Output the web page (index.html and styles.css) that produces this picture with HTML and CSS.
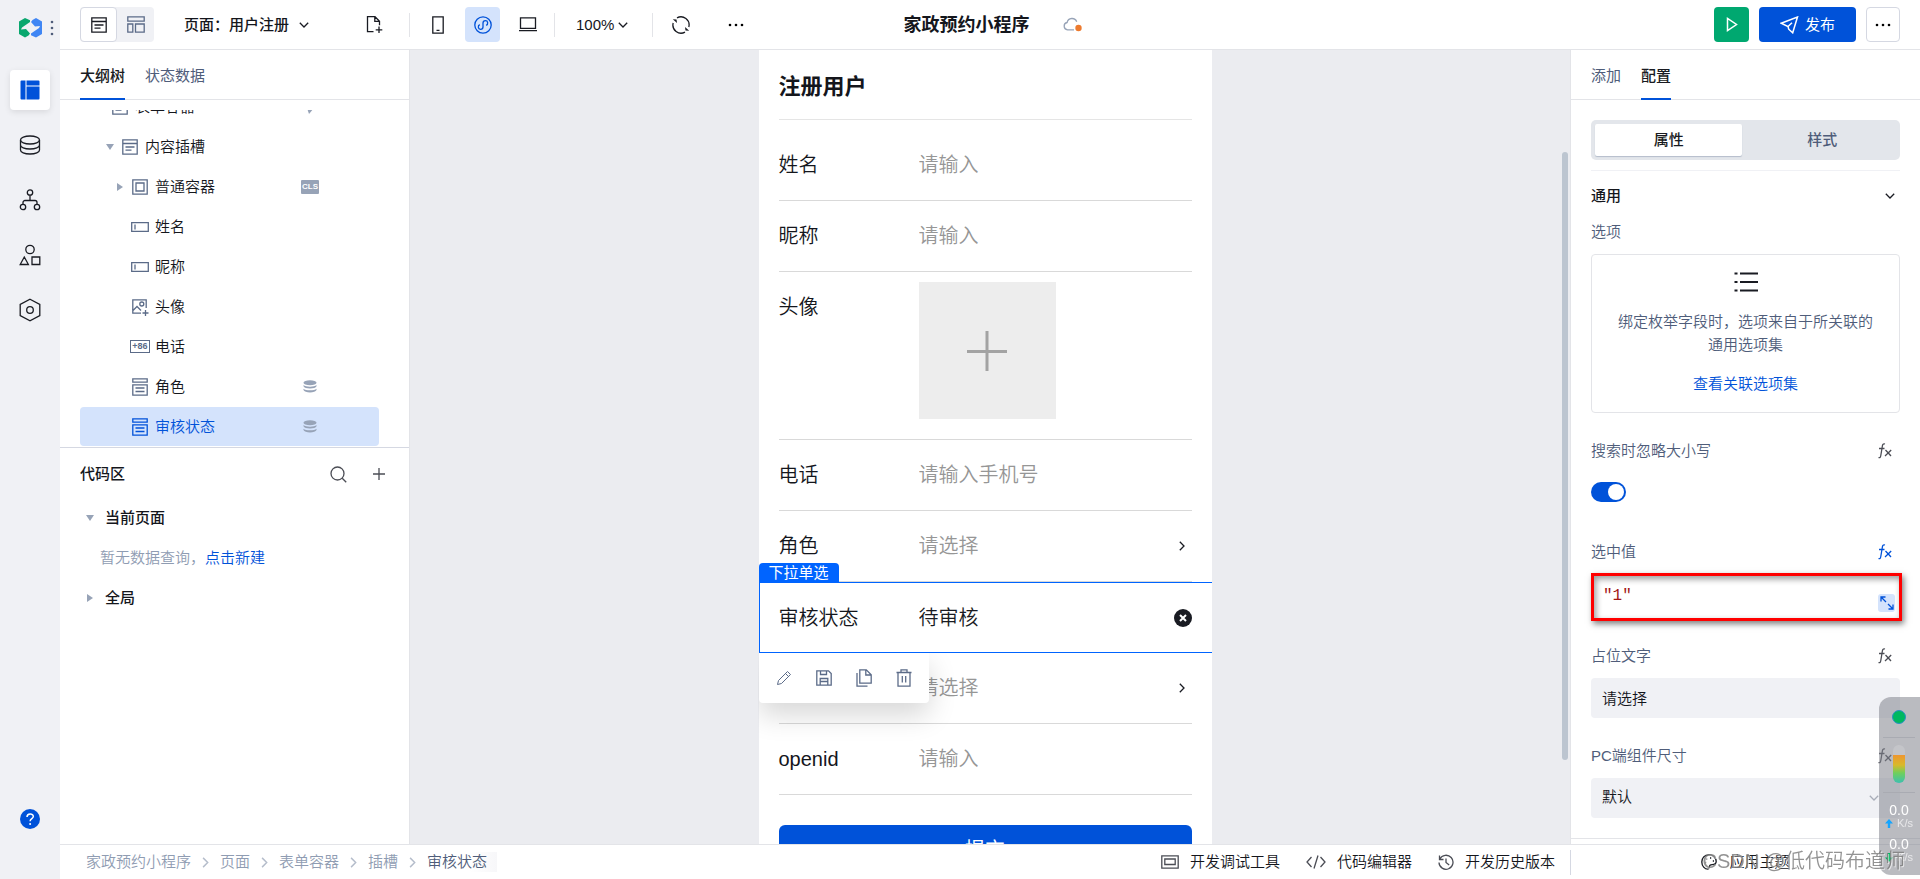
FILE: index.html
```html
<!DOCTYPE html>
<html lang="zh-CN">
<head>
<meta charset="utf-8">
<title>家政预约小程序</title>
<link rel="stylesheet" href="styles.css">
</head>
<body>
<svg class="defs" aria-hidden="true">
  <symbol id="i-form" viewBox="0 0 16 16"><path d="M.8.8h14.4v14.4H.8zM.8 4.5h14.4M3.5 8h9M3.5 11.2h6"/></symbol>
  <symbol id="i-down" viewBox="0 0 10 6"><path d="M.8.8 5 5 9.200.8"/></symbol>
  <symbol id="i-right" viewBox="0 0 6 10"><path d="M.8.8 5 5 .8 9.200"/></symbol>
  <symbol id="i-input" viewBox="0 0 18 10"><path d="M.7.7h16.600v8.600H.7zM4 2.500v5"/></symbol>
  <symbol id="i-select" viewBox="0 0 16 18"><path d="M.8.8h14.400v3.400H.8zM.8 6.800h14.400v10.400H.8zM3.500 10h9M3.500 13.500h9"/></symbol>
  <symbol id="i-stack" viewBox="0 0 14 13"><ellipse cx="7" cy="2.700" rx="6.500" ry="2.500"/><path d="M.5 5c2 2.200 11 2.200 13 0v1.300c-1 3-12 3-13 0zM.5 8.700c2 2.200 11 2.200 13 0V10c-1 3.200-12 3.200-13 0z"/></symbol>
  <symbol id="i-fx" viewBox="0 0 14 16"><path d="M7 1C5 .3 4.500 2 4.200 4L2.800 12.500c-.3 2-1 2.500-2.300 2M1 5.500h5.500M7.500 7l5.500 6M13.200 7 7 13"/></symbol>
</svg>
<div class="app">
  <nav class="rail" aria-label="主导航">
    <div class="brand">
      <svg width="23" height="20" viewBox="0 0 23 20"><path fill="#09a76e" d="M0 3.500 6 0 11 2.200V4L3 9.500 2 11.500 7 11l4 4.500-1.500 2L6 19.500 0 16z"/><path fill="#4086f4" d="M23 16 17 19.500 12 17.300V15.500L20 10l1-2-5 .5-4-4.500 1.500-2L17 0 23 3.500z"/></svg>
      <svg width="4" height="16" viewBox="0 0 4 16" fill="#4f5d7a"><circle cx="2" cy="2" r="1.300"/><circle cx="2" cy="8" r="1.300"/><circle cx="2" cy="14" r="1.300"/></svg>
    </div>
    <button class="rail-btn on" aria-label="页面"><svg width="20" height="20" viewBox="0 0 20 20" fill="#0052d9"><path d="M1.500.5H5.500V19.500H1.500a1 1 0 0 1-1-1v-17a1 1 0 0 1 1-1zM6.500 .5h12a1 1 0 0 1 1 1V5.500H6.500zM6.500 6.500h13v12a1 1 0 0 1-1 1h-12z"/></svg></button>
    <button class="rail-btn" aria-label="数据"><svg class="line" width="22" height="20" viewBox="0 0 22 20"><ellipse cx="11" cy="5" rx="9.500" ry="4"/><path d="M1.500 5v10c0 2.200 4 4 9.500 4s9.500-1.800 9.500-4V5M1.500 10c0 2.200 4 4 9.500 4s9.500-1.800 9.500-4"/></svg></button>
    <button class="rail-btn" aria-label="流程"><svg class="line" width="22" height="22" viewBox="0 0 22 22"><circle cx="11" cy="3.500" r="2.700"/><circle cx="4" cy="18" r="2.700"/><circle cx="18" cy="18" r="2.700"/><path d="M11 6.300v5.200M4 15.300v-1.800a2 2 0 0 1 2-2h10a2 2 0 0 1 2 2v1.800"/></svg></button>
    <button class="rail-btn" aria-label="素材"><svg class="line" width="22" height="22" viewBox="0 0 22 22"><circle cx="11" cy="5.500" r="4.200"/><path d="M5.300 13 1.200 20.500h8.200zM13 13h7.800v7.500H13z"/></svg></button>
    <button class="rail-btn" aria-label="设置"><svg class="line" width="22" height="24" viewBox="0 0 22 24"><path d="M11 1.200 20.800 6.500v11L11 22.800 1.200 17.500v-11z"/><circle cx="11" cy="12" r="3.300"/></svg></button>
    <button class="rail-btn help" aria-label="帮助"><svg width="20" height="20" viewBox="0 0 20 20"><circle cx="10" cy="10" r="10" fill="#0052d9"/><path d="M7 8c0-4 6.300-4 6.300-.5 0 2-3.200 2.300-3.200 4.700" fill="none" stroke="#fff" stroke-width="1.500"/><circle cx="10.100" cy="15" r="1" fill="#fff"/></svg></button>
  </nav>

  <div class="main">
    <header class="topbar">
      <div class="tools">
        <div class="modes">
          <button class="mode on" aria-label="表单视图"><svg class="line" width="16" height="16"><use href="#i-form"/></svg></button>
          <button class="mode" aria-label="布局视图"><svg class="line slate" width="18" height="17" viewBox="0 0 18 17"><path d="M.8.8h16.400v4.400H.8zM.8 8h5v8.200h-5zM8.500 8h8.700v8.200H8.500z"/></svg></button>
        </div>
        <button class="plain page-name">页面：用户注册 <svg class="line" width="10" height="6"><use href="#i-down"/></svg></button>
        <button class="plain new-page" aria-label="新建页面"><svg class="line" width="17" height="19" viewBox="0 0 17 19"><path d="M7.500 16.700H1.500v-15h7.500l4.500 4.500v4M8.800 1.700v4.600h4.700M13 11.500v6.500M9.700 14.800h6.600"/></svg></button>
        <span class="sep"></span>
        <div class="devices">
          <button class="device" aria-label="手机"><svg class="line" width="12" height="18" viewBox="0 0 12 18"><path d="M.8.8h10.400v16.400H.8zM4.500 14.300h3"/></svg></button>
          <button class="device on" aria-label="小程序"><svg class="line blue" width="18" height="18" viewBox="0 0 18 18"><circle cx="9" cy="9" r="8.200"/><path d="M5.800 8.700C3.500 9.800 4 13.300 6.500 13.300c1.400 0 2.500-.9 2.500-2.300V7c0-1.400 1.100-2.300 2.500-2.300 2.500 0 3 3.500.7 4.600"/></svg></button>
          <button class="device" aria-label="电脑"><svg class="line" width="18" height="15" viewBox="0 0 18 15"><path d="M1.500.8h15v10.500h-15zM0 13.700h18"/></svg></button>
        </div>
        <span class="sep"></span>
        <button class="plain zoom">100% <svg class="line" width="10" height="6"><use href="#i-down"/></svg></button>
        <span class="sep"></span>
        <button class="plain refresh" aria-label="刷新"><svg class="line" width="18" height="18" viewBox="0 0 18 18"><path d="M5 1.900A8.100 8.100 0 0 1 16.800 11M13 16.100A8.100 8.100 0 0 1 1.200 7"/><path d="M.8 3.200 4.500 3.500 5 7zM17.200 14.800l-3.700-.3L13 11z" fill="#191b22" stroke="none"/></svg></button>
        <button class="plain" aria-label="更多"><svg width="16" height="4" viewBox="0 0 16 4"><circle cx="2" cy="2" r="1.300"/><circle cx="8" cy="2" r="1.300"/><circle cx="14" cy="2" r="1.300"/></svg></button>
      </div>
      <div class="title">
        <h1>家政预约小程序</h1>
        <svg width="20" height="15" viewBox="0 0 20 15"><path d="M11 12.800H4.500a3.700 3.700 0 0 1-.4-7.300 5 5 0 0 1 9.600-.7" fill="none" stroke="#97a3b7" stroke-width="1.300"/><circle cx="15.500" cy="11" r="3.200" fill="#ed7b2f"/></svg>
      </div>
      <div class="actions">
        <button class="btn play" aria-label="预览"><svg width="12" height="15" viewBox="0 0 12 15"><path d="M1.500 1.500v12l9-6z" fill="none" stroke="#fff" stroke-width="1.500"/></svg></button>
        <button class="btn publish"><svg width="19" height="18" viewBox="0 0 19 18"><path d="M1.200 7.200 17.500 1 12.700 16.800 8.700 13.200 8 10.500 1.200 7.200zM8 10.500l4-3.800" fill="none" stroke="#fff" stroke-width="1.500"/></svg>发布</button>
        <button class="btn more" aria-label="更多操作"><svg width="16" height="4" viewBox="0 0 16 4"><circle cx="2" cy="2" r="1.300"/><circle cx="8" cy="2" r="1.300"/><circle cx="14" cy="2" r="1.300"/></svg></button>
      </div>
    </header>

    <div class="work">
      <aside class="left">
        <div class="tabs"><button class="tab on">大纲树</button><button class="tab">状态数据</button></div>
        <ul class="tree">
          <li class="node l1"><i class="caret"></i><svg class="line slate" width="16" height="16"><use href="#i-form"/></svg><span>表单容器</span><svg class="mark" width="18" height="14" viewBox="0 0 18 14"><path d="M6 8h7l-5 6z"/></svg></li>
          <li class="node l2"><i class="caret open"></i><svg class="line slate" width="16" height="16"><use href="#i-form"/></svg><span>内容插槽</span></li>
          <li class="node l3"><i class="caret closed"></i><svg class="line slate" width="16" height="16" viewBox="0 0 16 16"><path d="M.8.800h14.400v14.400H.8zM4 4h8v8H4z"/></svg><span>普通容器</span><b class="cls">CLS</b></li>
          <li class="node l3"><i class="caret"></i><svg class="line slate" width="18" height="10"><use href="#i-input"/></svg><span>姓名</span></li>
          <li class="node l3"><i class="caret"></i><svg class="line slate" width="18" height="10"><use href="#i-input"/></svg><span>昵称</span></li>
          <li class="node l3"><i class="caret"></i><svg class="line slate" width="18" height="18" viewBox="0 0 18 18"><path d="M10 15.200H1.800V1.800h13.400V10M2 12.500l4-4 4 4M14.500 12v6M11.500 15h6"/><circle cx="10.800" cy="6" r="2"/></svg><span>头像</span></li>
          <li class="node l3"><i class="caret"></i><b class="tel">+86</b><span>电话</span></li>
          <li class="node l3"><i class="caret"></i><svg class="line slate" width="16" height="18"><use href="#i-select"/></svg><span>角色</span><svg class="mark" width="18" height="13"><use href="#i-stack"/></svg></li>
          <li class="node l3 on"><i class="caret"></i><svg class="line blue" width="16" height="18"><use href="#i-select"/></svg><span>审核状态</span><svg class="mark" width="18" height="13"><use href="#i-stack"/></svg></li>
        </ul>
        <section class="code">
          <div class="code-head"><h2>代码区</h2>
            <button class="plain" aria-label="搜索"><svg class="line gray" width="17" height="17" viewBox="0 0 17 17"><circle cx="7.500" cy="7.500" r="6.500"/><path d="m12.200 12.200 4 4"/></svg></button>
            <button class="plain" aria-label="添加"><svg class="line gray" width="12" height="12" viewBox="0 0 12 12"><path d="M6 0v12M0 6h12"/></svg></button>
          </div>
          <div class="code-row"><i class="caret open"></i><b>当前页面</b></div>
          <div class="code-row hint">暂无数据查询，<a href="#">点击新建</a></div>
          <div class="code-row"><i class="caret closed"></i><b>全局</b></div>
        </section>
      </aside>

      <main class="canvas">
        <form class="phone">
          <h2>注册用户</h2>
          <div class="field"><label for="f1">姓名</label><input id="f1" placeholder="请输入"></div>
          <div class="field"><label for="f2">昵称</label><input id="f2" placeholder="请输入"></div>
          <div class="field avatar"><label for="f3">头像</label><button type="button" id="f3" class="upload" aria-label="上传头像"><svg width="40" height="40" viewBox="0 0 40 40"><path d="M20 0v40M0 20.500h40" stroke="#a3a3a3" stroke-width="3"/></svg></button></div>
          <div class="field"><label for="f4">电话</label><input id="f4" placeholder="请输入手机号"></div>
          <div class="field"><label for="f5">角色</label><select id="f5"><option>请选择</option></select><svg class="line arrow" width="6" height="10"><use href="#i-right"/></svg></div>
          <div class="field picked"><span class="tag">下拉单选</span>
            <label for="f6">审核状态</label><select id="f6"><option>待审核</option></select>
            <svg class="clear" width="18" height="18" viewBox="0 0 18 18"><circle cx="9" cy="9" r="9" fill="#191b22"/><path d="m6 6 6 6M12 6l-6 6" stroke="#fff" stroke-width="2"/></svg>
            <div class="float-tools">
              <button type="button" aria-label="编辑"><svg class="line slate thin" width="16" height="16" viewBox="0 0 16 16"><path d="M1.500 14.500 2.500 10.500 11.500 1.500 14.500 4.500 5.500 13.500zM9.500 3.500l3 3"/></svg></button>
              <button type="button" aria-label="保存"><svg class="line slate" width="16" height="16" viewBox="0 0 16 16"><path d="M.8.800h11.700l2.700 2.700v11.700H.8zM4.500 1v3.500h6V1M4.200 15V8.500h7.600V15M4.200 11.500h7.600"/></svg></button>
              <button type="button" aria-label="复制"><svg class="line slate" width="16" height="18" viewBox="0 0 16 18"><path d="M3.800.8h6.500l4.900 4.900v8.500H3.800zM9.800 1v5h5M1 4v13.200h10.500"/></svg></button>
              <button type="button" aria-label="删除"><svg class="line slate" width="16" height="18" viewBox="0 0 16 18"><path d="M.5 3.500h15M2 3.500v13.700h12V3.500M5 3.500V.8h6v2.700M6.300 7v6.500M9.700 7v6.500"/></svg></button>
            </div>
          </div>
          <div class="field"><span class="blank"></span><select aria-label="选择"><option>请选择</option></select><svg class="line arrow" width="6" height="10"><use href="#i-right"/></svg></div>
          <div class="field"><label for="f8">openid</label><input id="f8" placeholder="请输入"></div>
          <button type="button" class="submit">提交</button>
        </form>
        <div class="scroll"><i></i></div>
      </main>

      <aside class="right">
        <div class="tabs"><button class="tab">添加</button><button class="tab on">配置</button></div>
        <div class="seg"><button class="on">属性</button><button>样式</button></div>
        <div class="peek"><span>下拉单选</span></div>
        <div class="props">
          <div class="prop-head"><h3>通用</h3><svg class="line" width="10" height="6"><use href="#i-down"/></svg></div>
          <div class="name">选项</div>
          <div class="bind">
            <svg width="24" height="20" viewBox="0 0 24 20"><path d="M6 1.500h18M6 10h18M6 18.500h18M.5 1.500h3M.5 10h3M.5 18.500h3" stroke="#191b22" stroke-width="2"/></svg>
            <p>绑定枚举字段时，选项来自于所关联的通用选项集</p>
            <a href="#">查看关联选项集</a>
          </div>
          <div class="name"><label for="p1">搜索时忽略大小写</label><svg class="line gray" width="14" height="16"><use href="#i-fx"/></svg></div>
          <input class="switch" id="p1" type="checkbox" role="switch" checked>
          <div class="name"><label for="p2">选中值</label><svg class="line blue" width="14" height="16"><use href="#i-fx"/></svg></div>
          <div class="value"><input id="p2" value='"1"'><button class="expand" aria-label="展开"><svg class="line blue" width="14" height="14" viewBox="0 0 14 14"><path d="M6 6 1 1M1 5.500V1h4.500M8 8l5 5M13 8.500V13H8.500"/></svg></button></div>
          <div class="name"><label for="p3">占位文字</label><svg class="line gray" width="14" height="16"><use href="#i-fx"/></svg></div>
          <input class="box" id="p3" value="请选择">
          <div class="name"><label for="p4">PC端组件尺寸</label><svg class="line gray" width="14" height="16"><use href="#i-fx"/></svg></div>
          <div class="pick"><select class="box" id="p4"><option>默认</option></select><svg class="line" width="10" height="6"><use href="#i-down"/></svg></div>
        </div>
      </aside>
    </div>

    <footer class="status">
      <nav class="crumbs" aria-label="路径">
        <a href="#">家政预约小程序</a><svg class="line" width="7" height="11"><use href="#i-right"/></svg>
        <a href="#">页面</a><svg class="line" width="7" height="11"><use href="#i-right"/></svg>
        <a href="#">表单容器</a><svg class="line" width="7" height="11"><use href="#i-right"/></svg>
        <a href="#">插槽</a><svg class="line" width="7" height="11"><use href="#i-right"/></svg>
        <a href="#" class="here">审核状态</a>
      </nav>
      <div class="dev">
        <button class="plain"><svg class="line gray" width="18" height="14" viewBox="0 0 18 14"><path d="M.8.800h16.400v12.400H.8zM3.800 4h10.400v5.500H3.800z"/></svg>开发调试工具</button>
        <button class="plain"><svg class="line gray" width="20" height="14" viewBox="0 0 20 14"><path d="M5.500 2 1 7l4.500 5M14.500 2 19 7l-4.500 5M12 .5 8 13.500"/></svg>代码编辑器</button>
        <button class="plain"><svg class="line gray" width="16" height="16" viewBox="0 0 16 16"><path d="M1.500 1.500v4h4M1.800 5A7 7 0 1 1 1 8.500M8 4.500v4l3.200 2.500"/></svg>开发历史版本</button>
      </div>
      <div class="theme"><button class="plain"><svg class="line" width="16" height="16" viewBox="0 0 16 16"><path d="M8 .8C3.500.8.8 4 .8 8s3 7.200 6 7.200c2.500 0 1-3 2.200-4 1.500-1.200 6.200.5 6.200-3.700C15.200 3.500 12 .8 8 .8z"/><path d="M4 8.500h1.200M5 5h1.200M9 4h1.200M11.800 7H13"/></svg>应用主题</button></div>
    </footer>
  </div>
</div>

<div class="watermark">CSDN @低代码布道师</div>
<div class="monitor">
  <i class="dot"></i><hr><i class="battery"></i><hr>
  <div class="speed">0.0<small><svg width="8" height="9" viewBox="0 0 8 9" fill="#14a5ff"><path d="M4 0 8 4.500H5.200V9H2.800V4.500H0z"/></svg> K/s</small></div>
  <div class="speed">0.0<small><svg width="8" height="9" viewBox="0 0 8 9" fill="#00b860"><path d="M4 9 0 4.500h2.800V0h2.400v4.500H8z"/></svg> K/s</small></div>
</div>
</body>
</html>
```
FILE: styles.css
```css
* { box-sizing: border-box; }
body {
  margin: 0;
  font: 15px/20px "Liberation Sans", "Noto Sans CJK SC", sans-serif;
  font-weight: 350;
  color: #14161c;
  background: #fff;
}
button, input, select { font: inherit; color: inherit; margin: 0; padding: 0; border: 0; background: none; }
h1, h2, h3 { margin: 0; font-weight: 500; font-size: 15px; }
p, ul { margin: 0; padding: 0; }
b { font-weight: 500; }
a { color: #0052d9; text-decoration: none; }
svg { flex: none; display: block; }
.defs { position: absolute; width: 0; height: 0; }
.line { fill: none; stroke: #191b22; stroke-width: 1.3; }
.slate { stroke: #5b6b88; }
.blue { stroke: #0052d9; }
.gray { stroke: #4b4d55; }
.thin { stroke-width: 1; }
.plain { display: flex; align-items: center; }

.app { display: flex; height: 100vh; overflow: hidden; }
.main { flex: 1; min-width: 0; display: flex; flex-direction: column; }

.rail { width: 60px; background: #f0f1f5; display: flex; flex-direction: column; align-items: center; gap: 15px; padding-bottom: 40px; }
.brand { display: flex; align-items: center; gap: 8px; height: 55px; padding-left: 12px; }
.rail-btn { width: 40px; height: 40px; border-radius: 4px; display: flex; align-items: center; justify-content: center; }
.rail-btn.on { background: #fff; box-shadow: 0 2px 6px rgba(0, 0, 0, .1); }
.help { margin-top: auto; }

.topbar { height: 50px; border-bottom: 1px solid #e3e4e8; padding: 0 20px; display: grid; grid-template-columns: 1fr auto 1fr; align-items: center; }
.tools { display: flex; align-items: center; }
.modes { display: flex; background: #f0f1f5; border-radius: 4px; }
.mode { width: 37px; height: 35px; border-radius: 4px; display: flex; align-items: center; justify-content: center; }
.mode.on { background: #fff; border: 1px solid #d5d8e2; }
.page-name { margin-left: 30px; gap: 10px; font-weight: 500; }
.new-page { margin-left: 57px; }
.sep { width: 1px; height: 24px; background: #e3e4e8; }
.new-page + .sep { margin-left: 26px; }
.devices { display: flex; gap: 10px; margin: 0 9px 0 10px; }
.device { width: 35px; height: 35px; border-radius: 4px; display: flex; align-items: center; justify-content: center; }
.device.on { background: #d4e3fc; }
.zoom { gap: 4px; margin: 0 24px 0 21px; }
.refresh { margin: 0 38px 0 19px; }
.title { display: flex; align-items: center; gap: 33px; padding-left: 6px; }
.title h1 { font-size: 18px; font-weight: 700; }
.actions { display: flex; justify-content: flex-end; gap: 10px; }
.btn { width: 35px; height: 35px; border-radius: 4px; display: flex; align-items: center; justify-content: center; gap: 6px; }
.play { background: #00a870; }
.publish { width: 97px; background: #0052d9; color: #fff; font-weight: 400; }
.more { width: 34px; border: 1px solid #d5d8e2; }

.work { flex: 1; min-height: 0; display: flex; }
.left { width: 350px; border-right: 1px solid #e3e4e8; display: flex; flex-direction: column; }
.tabs { height: 50px; flex: none; border-bottom: 1px solid #e3e4e8; padding: 0 20px; display: flex; gap: 20px; }
.tab { height: 50px; padding-top: 3px; color: #4f5d7a; font-weight: 400; border-bottom: 2px solid transparent; }
.tab.on { color: #191b22; font-weight: 500; border-color: #0052d9; }
.tree { list-style: none; height: 337px; margin: 10px 30px 0 20px; flex: none; display: flex; flex-direction: column; justify-content: flex-end; gap: 1px; overflow: hidden; padding-bottom: 1px; }
.node { height: 39px; flex: none; display: flex; align-items: center; border-radius: 4px; }
.node.on { background: #d4e3fc; color: #0052d9; }
.l1 { padding-left: 12px; }
.l2 { padding-left: 22px; }
.l3 { padding-left: 32px; }
.node > .line, .tel { width: 20px; margin: 0 5px 0 2px; }
.tel { height: 13px; border: 1px solid #5b6b88; color: #5b6b88; font: 700 9px/11px "Liberation Sans", sans-serif; text-align: center; }
.caret { width: 16px; flex: none; display: flex; justify-content: center; }
.caret::after { content: ""; border: 0 solid transparent; }
.caret.open::after { border-width: 6px 4px 0; border-top-color: #97a3b7; }
.caret.closed::after { border-width: 4px 0 4px 6px; border-left-color: #97a3b7; }
.mark, .cls { margin: 0 60px 0 auto; fill: #97a3b7; }
.cls { width: 18px; height: 14px; background: #97a3b7; color: #fff; border-radius: 1px; font: 700 8px/14px "Liberation Sans", sans-serif; text-align: center; }
.code { flex: 1; border-top: 1px solid #d5d8e2; padding: 6px 20px; }
.code-head { height: 40px; display: flex; align-items: center; gap: 26px; padding-right: 4px; }
.code-head h2 { flex: 1; }
.code-row { height: 40px; display: flex; align-items: center; gap: 7px; padding-left: 2px; }
.code-head + .code-row { margin-top: 4px; }
.code-row.hint { gap: 0; padding-left: 20px; color: #8f9cb2; }

.canvas { flex: 1; min-width: 0; background: #ebecf0; display: flex; overflow: hidden; }
.phone { width: 453px; margin: 0 auto; padding: 0 20px; background: #fff; flex: none; font-size: 20px; line-height: 30px; }
.phone h2 { font-size: 22px; font-weight: 700; padding: 22px 0 17px; border-bottom: 1px solid #e5e5e5; margin-bottom: 10px; }
.field { height: 71px; display: flex; align-items: center; border-bottom: 1px solid #d9d9d9; }
.field label, .blank { width: 140px; flex: none; }
.field input, .field select { flex: 1; min-width: 0; height: 40px; appearance: none; outline: 0; }
.field input::placeholder, .field select { color: #969696; opacity: 1; }
.arrow { margin-right: 7px; }
.field.avatar { height: auto; align-items: flex-start; padding: 10px 0 20px; }
.avatar label { padding-top: 10px; }
.upload { width: 137px; height: 137px; background: #ededed; display: flex; align-items: center; justify-content: center; }
.field.picked { position: relative; margin: 0 -20px; padding: 0 20px; border: 1px solid #0064ff; border-right: 0; padding-left: 19px; }
.field.picked select { color: #191b22; }
.tag { position: absolute; left: -1px; bottom: 100%; width: 80px; height: 20px; background: #0064ff; color: #fff; border-radius: 4px 4px 0 0; font-size: 15px; line-height: 20px; text-align: center; font-weight: 400; }
.float-tools { position: absolute; left: -1px; top: calc(100% + 1px); z-index: 1; width: 170px; height: 50px; padding: 0 5px; background: #fff; border-radius: 0 0 4px 4px; display: flex; box-shadow: 0 12px 28px rgba(0, 0, 0, .16); clip-path: inset(0 -50px -50px 0); }
.float-tools button { width: 40px; display: flex; align-items: center; justify-content: center; }
.submit { display: block; width: 100%; height: 50px; margin-top: 30px; border-radius: 6px; background: #0052d9; color: #fff; font-weight: 400; }
.scroll { width: 10px; padding: 102px 2px 84px; display: flex; }
.scroll i { flex: 1; background: #bcc5d0; border-radius: 3px; }

.right { width: 350px; border-left: 1px solid #e3e4e8; display: flex; flex-direction: column; overflow: hidden; }
.seg { display: flex; margin: 20px 20px 0; padding: 4px; height: 40px; flex: none; border-radius: 5px; background: #e3e6eb; }
.seg button { flex: 1; padding-left: 6px; border-radius: 2px; color: #4f5d7a; font-weight: 500; }
.seg .on { flex: 0 0 49%; padding-left: 0; background: #fff; color: #191b22; box-shadow: 0 1px 1px #b4bccb; }
.peek { height: 2px; flex: none; margin: 9px 20px 0; padding-left: 11px; overflow: hidden; display: flex; align-items: flex-end; border-bottom: 1px solid #f0f1f5; font-weight: 500; }
.props { flex: 1; min-height: 0; padding: 5px 20px 0; border-bottom: 1px solid #e3e4e8; margin-bottom: 5px; }
.prop-head { height: 40px; display: flex; align-items: center; justify-content: space-between; padding-right: 5px; }
.name { height: 30px; display: flex; align-items: center; justify-content: space-between; padding-right: 8px; color: #4f5d7a; }
.prop-head + .name { margin-top: 1px; }
.bind { border: 1px solid #e3e4e8; border-radius: 4px; margin: 7px 0 23px; padding: 17px 20px; display: flex; flex-direction: column; align-items: center; text-align: center; color: #4f5d7a; height: 159px; }
.bind p { line-height: 23px; margin: 18px 0; }
.switch { appearance: none; display: block; width: 35px; height: 20px; margin: 16px 0 35px; border-radius: 10px; background: #0052d9; padding: 2px; }
.switch::after { content: ""; display: block; width: 16px; height: 16px; margin-left: auto; border-radius: 8px; background: #fff; }
.value { height: 48px; margin: 6px -2px 20px 0; border: 3px solid #f00; box-shadow: 2px 3px 6px rgba(0, 0, 0, .5), inset 2px 3px 6px rgba(0, 0, 0, .4); padding: 6px 4px 6px 9px; display: flex; justify-content: space-between; }
.value input { flex: 1; min-width: 0; height: 28px; font: 16px/28px "Liberation Mono", monospace; color: #a31515; outline: 0; }
.expand { width: 17px; height: 18px; align-self: flex-end; background: #d4e3fc; border-radius: 3px; display: flex; align-items: center; justify-content: center; }
.box { appearance: none; display: block; width: 100%; height: 40px; padding: 0 11px 2px; border-radius: 4px; background: #f0f1f5; }
input.box { margin: 7px 0 23px; }
.pick { display: grid; align-items: center; margin-top: 7px; }
.pick > * { grid-area: 1 / 1; }
.pick svg { justify-self: end; margin-right: 21px; stroke: #a8adb8; }

.status { height: 35px; flex: none; border-top: 1px solid #e3e4e8; display: flex; align-items: center; }
.crumbs { display: flex; align-items: center; gap: 11px; padding-left: 26px; flex: 1; }
.crumbs a { color: #8f9cb2; }
.crumbs svg { stroke: #b5bdcb; }
.crumbs .here { color: #4f5d7a; padding-right: 10px; background: linear-gradient(90deg, #fff 60%, #f7f7f9); }
.dev { display: flex; gap: 26px; margin-right: 15px; }
.dev .plain { gap: 11px; }
.theme { width: 350px; height: 25px; border-left: 1px solid #d5d8e2; display: flex; align-items: center; justify-content: center; }
.theme .plain { gap: 12px; }

.watermark { position: fixed; right: 15px; bottom: 3px; z-index: 3; font-size: 20px; line-height: 30px; color: rgba(120, 120, 120, .8); text-shadow: 1px 1px 0 rgba(255, 255, 255, .6); }
.monitor { position: fixed; right: 0; bottom: 4px; z-index: 2; width: 41px; height: 178px; padding: 13px 5px 0 4px; border-radius: 12px 0 0 12px; background: rgba(130, 132, 140, .55); color: #fff; display: flex; flex-direction: column; align-items: center; }
.monitor hr { width: 100%; height: 1px; margin: 13px 0 7px; border: 0; background: #a9abb2; flex: none; }
.dot { width: 14px; height: 14px; flex: none; border-radius: 7px; background: #00b860; border: 1px solid #2c8fc4; }
.battery { width: 12px; height: 38px; flex: none; border-radius: 6px; background: linear-gradient(#c4c5c9 10px, #ee9630 10px, #d9b92a 20px, #6fcf5c 28px, #3cc0b0); }
.battery + hr { margin: 9px 0 10px; }
.speed { font-size: 14px; line-height: 14px; height: 34px; text-align: center; font-weight: 400; }
.speed small { display: flex; align-items: center; gap: 4px; font-size: 11px; line-height: 12px; color: #e8e8ea; }
```
